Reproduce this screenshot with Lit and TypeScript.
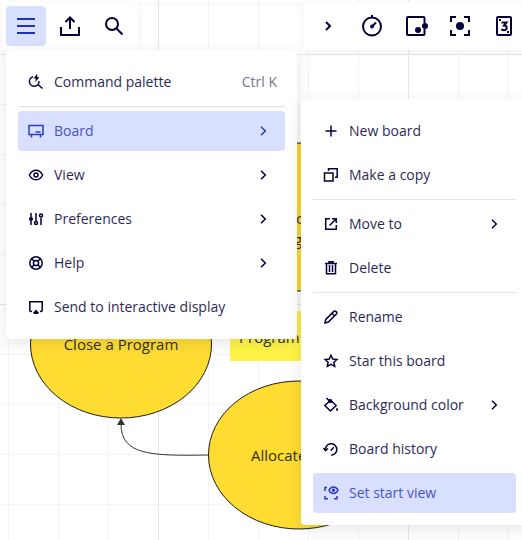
import { LitElement, html, svg, css, nothing, TemplateResult } from "lit";
import { customElement, property } from "lit/decorators.js";

const icons: Record<string, TemplateResult> = {
  menu: svg`<path d="M3 5h18M3 12h18M3 19h18"/>`,
  upload: svg`<path d="M3 13v8h18v-8M12 15V3.500M7.500 8L12 3.500 16.500 8"/>`,
  search: svg`<circle cx="10" cy="10" r="6"/><path d="M14.500 14.500l6 6"/>`,
  expand: svg`<path d="M10 8l4 4-4 4"/>`,
  timer: svg`<circle cx="12" cy="12.500" r="9"/><path d="M12 12.500l4-4M12 1v3"/><circle class="fill" cx="12" cy="12.500" r="2"/>`,
  frame: svg`<path d="M20.500 9V4q0-1-1-1H4Q3 3 3 4v16q0 1 1 1h15.500q1 0 1-1v-5"/><circle class="fill" cx="14" cy="16" r="3"/><circle class="fill" cx="21" cy="12" r="3"/>`,
  focus: svg`<path d="M3 8V3h5M16 3h5v5M21 16v5h-5M8 21H3v-5"/><circle class="fill" cx="12" cy="12" r="4"/>`,
  cards: svg`<rect x="5" y="3" width="14" height="18" rx="1"/><path d="M9.500 8.500h5l-2.500 3q2.700 0 2.700 2.300 0 2.400-2.700 2.400-1.800 0-2.700-1.100"/><path class="fill" d="M7 5h2v2H7zM15 17h2v2h-2z"/>`,
  command: svg`<path d="M5 2.800a4.800 4.800 0 1 0 6 4.200M10 10.500l4.500 4"/><path class="fill" d="M9 0L5.500 4.500h2.300L7.300 8 11.500 3.300H9.300z"/>`,
  board: svg`<path d="M1 2.500h14v9H1zM3.500 12v2.500M12.500 12v2.500M7.500 9h5"/>`,
  eye: svg`<path d="M1.300 8Q4 3.200 8 3.200T14.700 8Q12 12.800 8 12.800T1.300 8z"/><circle cx="8" cy="8" r="2"/>`,
  sliders: svg`<path d="M3 2v12M8 2v8M13 7v7"/><circle cx="3" cy="8" r="1.300"/><circle cx="8" cy="12" r="1.500"/><circle cx="13" cy="4.500" r="1.500"/>`,
  help: svg`<circle cx="8" cy="8" r="6.200"/><circle cx="8" cy="8" r="2.600"/><path d="M3.700 3.700l2.500 2.500M9.800 9.800l2.500 2.500M12.300 3.700L9.800 6.200M6.200 9.800l-2.500 2.500"/>`,
  display: svg`<path d="M4 12.500H3q-1.200 0-1.200-1.200V2.700h12.400v8.600q0 1.200-1.200 1.200h-1"/><path class="fill" d="M8 10.500q1.500 2 3 3L10 15H6l-1-1.500q1.500-1 3-3z"/>`,
  plus: svg`<path d="M8 2.500v11M2.500 8h11"/>`,
  copy: svg`<path d="M1.500 6h8.500v8H1.500zM5.500 4V1.700h8.700v8.600H12"/>`,
  move: svg`<path d="M7 2.700H2.700v10.600h10.600V9M9 2.700h4.300V7M13.300 2.700L6.500 9.500"/>`,
  trash: svg`<path d="M2 3.500h12M6 3V1.700h4V3M3.500 4v9.700h9V4M6.500 5v7M9.500 5v7"/>`,
  pencil: svg`<path d="M2 14l.8-3.600 7.800-7.800q1.300-1.300 2.600 0t0 2.600l-7.800 7.900zM9 4.200L11.700 7"/>`,
  star: svg`<path d="M8 2.200l1.800 3.800 4.100.5-3 2.800.8 4.100L8 11.400l-3.700 2 .8-4.100-3-2.800 4.100-.5z"/>`,
  bucket: svg`<path d="M7.500 3.200l5.600 5.300L7.500 14 1.800 8.500zM3.500 1l4.500 4.500"/><path class="fill" d="M5 2.800l3-1 2.500 4H6zM14 10.500q2 3 0 3.500-2-.500 0-3.500z"/>`,
  history: svg`<path d="M2.500 9.500a5.700 5.700 0 1 1 5.700 4.700M.5 7l2 2.700L5 7.500M8.300 9l2.500-2.700M7.500 9h1.500"/>`,
  startview: svg`<path d="M4 2.500H2V6M2 11v2.700h3M11 13.700h3V11M6 5.200Q7.500 2 10.500 2T15 5.200Q13.500 8.500 10.500 8.500T6 5.200z"/><circle cx="10.500" cy="5.200" r="1"/>`,
  chevron: svg`<path d="M6 3.700L10.300 8 6 12.300"/>`,
};

const iconStyles = css`
  svg.icon {
    display: block;
    flex: none;
    fill: none;
    stroke: currentColor;
    stroke-width: 1.5;
  }
  svg.large {
    stroke-width: 2;
  }
  .icon .fill {
    fill: currentColor;
    stroke: none;
  }
`;

const icon = (name: string, size = 16) => html`
  <svg class="icon ${size > 16 ? "large" : ""}" width=${size} height=${size}
    viewBox="0 0 ${size} ${size}" aria-hidden="true">${icons[name]}</svg>`;

interface Entry {
  icon: string;
  label: string;
  hint?: string;
  more?: boolean;
  active?: boolean;
}

type Row = Entry | "divider";

const mainMenu: Row[] = [
  { icon: "command", label: "Command palette", hint: "Ctrl K" },
  "divider",
  { icon: "board", label: "Board", more: true, active: true },
  { icon: "eye", label: "View", more: true },
  { icon: "sliders", label: "Preferences", more: true },
  { icon: "help", label: "Help", more: true },
  { icon: "display", label: "Send to interactive display" },
];

const boardMenu: Row[] = [
  { icon: "plus", label: "New board" },
  { icon: "copy", label: "Make a copy" },
  "divider",
  { icon: "move", label: "Move to", more: true },
  { icon: "trash", label: "Delete" },
  "divider",
  { icon: "pencil", label: "Rename" },
  { icon: "star", label: "Star this board" },
  { icon: "bucket", label: "Background color", more: true },
  { icon: "history", label: "Board history" },
  { icon: "startview", label: "Set start view", active: true },
];

@customElement("board-menu")
export class BoardMenu extends LitElement {
  @property({ attribute: false }) rows: Row[] = [];

  static styles = [
    iconStyles,
    css`
      :host {
        display: flex;
        flex-direction: column;
        gap: 4px;
        box-sizing: border-box;
        padding: 12px;
        border-radius: 4px;
        background: #fff;
        box-shadow: 0 4px 16px rgba(5, 0, 56, 0.1);
      }
      .divider {
        height: 1px;
        width: 100%;
        margin: 0;
        border: 0;
        background: #e3e3e6;
      }
      .item {
        display: flex;
        align-items: center;
        gap: 10px;
        height: 40px;
        padding: 0 8px 0 10px;
        border: 0;
        border-radius: 4px;
        background: none;
        color: #050038;
        font: 14px "Open Sans", sans-serif;
        text-align: left;
        white-space: nowrap;
      }
      .label,
      .hint {
        padding-bottom: 2px;
      }
      .label {
        flex: 1;
        opacity: 0.85;
      }
      .hint {
        color: #77758c;
      }
      .more {
        margin-right: 6px;
      }
      .active {
        background: #d9dfff;
        color: #2c3cbc;
      }
    `,
  ];

  render() {
    return this.rows.map((row) =>
      row === "divider"
        ? html`<hr class="divider" />`
        : html`<button class="item ${row.active ? "active" : ""}">
            ${icon(row.icon)}
            <span class="label">${row.label}</span>
            ${row.hint ? html`<span class="hint">${row.hint}</span>` : nothing}
            ${row.more ? html`<span class="more">${icon("chevron")}</span>` : nothing}
          </button>`
    );
  }
}

@customElement("board-toolbar")
export class BoardToolbar extends LitElement {
  @property({ attribute: false }) tools: [string, string][] = [];
  @property() pressed = "";

  static styles = [
    iconStyles,
    css`
      :host {
        display: flex;
        gap: 4px;
        padding: 4px;
        border-radius: 4px;
        background: #fff;
        box-shadow: 0 2px 8px rgba(5, 0, 56, 0.06);
      }
      .tool {
        display: grid;
        place-items: center;
        width: 40px;
        height: 40px;
        padding: 0;
        border: 0;
        border-radius: 4px;
        background: none;
        color: #050038;
      }
      .pressed {
        background: #d9dfff;
        color: #2232b8;
      }
    `,
  ];

  render() {
    return this.tools.map(
      ([name, label]) => html`<button
        class="tool ${name === this.pressed ? "pressed" : ""}"
        aria-label=${label}
      >
        ${icon(name, 24)}
      </button>`
    );
  }
}

@customElement("app-root")
export class AppRoot extends LitElement {
  static styles = css`
    :host {
      display: block;
      position: relative;
      min-height: 100vh;
      overflow: hidden;
      background-color: #fff;
      background-image: linear-gradient(#e6e6e8 1px, transparent 1px),
        linear-gradient(90deg, #e6e6e8 1px, transparent 1px),
        linear-gradient(#f4f4f6 1px, transparent 1px),
        linear-gradient(90deg, #f4f4f6 1px, transparent 1px);
      background-size: 250px 250px, 250px 250px, 50px 50px, 50px 50px;
      background-position: 0 54px, 158px 0, 0 4px, 8px 0;
    }
    .canvas {
      position: absolute;
      inset: 0;
      width: 100%;
      height: 100%;
    }
    .canvas text {
      font: 15px "Open Sans", sans-serif;
      fill: #33301f;
    }
    .shape {
      fill: #ffdc32;
      stroke: #1f1e1a;
    }
    .note {
      fill: #fff445;
    }
    .arrow {
      fill: none;
      stroke: #333;
    }
    .tip {
      fill: #333;
    }
    .content {
      position: relative;
    }
    .bars {
      display: flex;
      justify-content: space-between;
      padding: 2px 0 0 2px;
    }
    .tools {
      margin-right: -6px;
    }
    .menus {
      display: flex;
      align-items: flex-start;
      gap: 4px;
      padding-left: 6px;
    }
    .main {
      flex: 0 0 291px;
    }
    .sub {
      flex: 1;
      margin: 49px -6px 0 0;
    }
  `;

  render() {
    return html`
      <svg class="canvas" aria-label="Board">
        <ellipse class="shape" cx="299" cy="217" rx="90" ry="74" />
        <text x="296" y="224">c</text>
        <text x="294" y="245">g</text>
        <rect class="note" x="230" y="311" width="140" height="50" />
        <text x="239" y="343">Program</text>
        <ellipse class="shape" cx="121" cy="344" rx="90.500" ry="74" />
        <text x="121" y="350" text-anchor="middle">Close a Program</text>
        <ellipse class="shape" cx="299" cy="455" rx="90.500" ry="74" />
        <text x="251" y="461">Allocate</text>
        <path class="arrow" d="M208 455C150 456 121 455 121 424" />
        <path class="tip" d="M121 418l4 7h-8z" />
      </svg>
      <div class="content">
        <header class="bars">
          <board-toolbar
            pressed="menu"
            .tools=${[["menu", "Main menu"], ["upload", "Export"], ["search", "Search"]]}
          ></board-toolbar>
          <board-toolbar
            class="tools"
            .tools=${[
              ["expand", "Expand"],
              ["timer", "Timer"],
              ["frame", "Frames"],
              ["focus", "Focus"],
              ["cards", "Estimation"],
            ]}
          ></board-toolbar>
        </header>
        <nav class="menus">
          <board-menu class="main" .rows=${mainMenu}></board-menu>
          <board-menu class="sub" .rows=${boardMenu}></board-menu>
        </nav>
      </div>
    `;
  }
}
